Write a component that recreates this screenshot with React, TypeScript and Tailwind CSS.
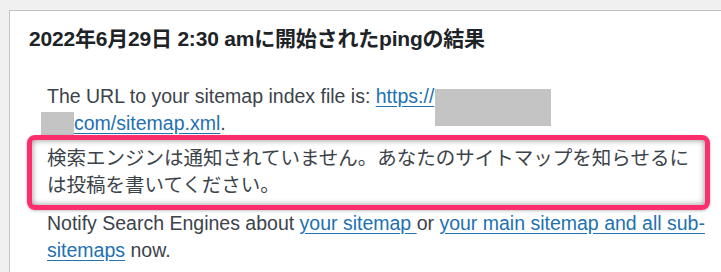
import React from 'react'

const latin = { fontFamily: '"Liberation Sans", "Noto Sans CJK JP", sans-serif' }

export default function App() {
  return (
    <div className="h-[272px] w-[721px] overflow-hidden bg-[#f0f0f1] pl-[9px] pt-[10px]" style={latin}>
      <div className="w-[760px] h-[300px] border border-[#c3c4c7] bg-white pt-[14px]">
        <h2 className="pl-[19px] text-[21px] leading-[28px] font-semibold tracking-[-0.2px] text-[#1d2327]">
          2022年6月29日 2:30 amに開始されたpingの結果
        </h2>

        <div className="pl-[37px] w-[702px] text-[19.5px] leading-[27px] text-[#3c434a]">
          <p className="relative mt-[30px]">
            The URL to your sitemap index file is:{' '}
            <a href="#" className="text-[#2271b1] underline underline-offset-[3px]">https://</a>
            <br />
            <span className="inline-block w-[27px]" />
            <a href="#" className="text-[#2271b1] underline underline-offset-[3px]">com/sitemap.xml</a>.
            {/* redacted parts of the address */}
            <span className="absolute left-[388px] top-[6px] h-[37px] w-[116px] bg-[#c4c4c4]" />
            <span className="absolute left-[-6px] top-[29px] h-[24px] w-[33px] bg-[#c4c4c4]" />
          </p>

          <div className="relative ml-[-20px] mt-[-2px] w-[683px] rounded-[8px] border-[5px] border-[#fe2d6c] pl-[15px] pr-[5px] pt-[5px] pb-[6px] shadow-[inset_0_0_6px_rgba(0,0,0,0.45),0_1px_3px_rgba(0,0,0,0.25)]">
            <p>検索エンジンは通知されていません。あなたのサイトマップを知らせるには投稿を書いてください。</p>
          </div>

          <p>
            Notify Search Engines about{' '}
            <a href="#" className="text-[#2271b1] underline underline-offset-[3px]">your sitemap </a>
            {' '}or{' '}
            <a href="#" className="text-[#2271b1] underline underline-offset-[3px]">your main sitemap and all sub-</a>
            <br />
            <a href="#" className="text-[#2271b1] underline underline-offset-[3px]">sitemaps</a>
            {' '}now.
          </p>
        </div>
      </div>
    </div>
  )
}
